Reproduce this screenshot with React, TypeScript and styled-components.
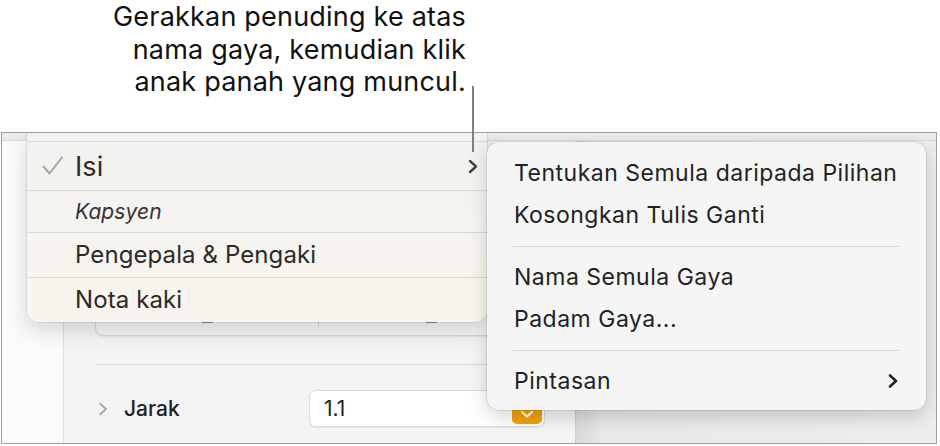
import React from "react";
import styled, { createGlobalStyle } from "styled-components";

const Global = createGlobalStyle`
  html, body { margin: 0; padding: 0; background: #ffffff; }
  body { font-family: Inter, "Noto Sans", sans-serif; -webkit-font-smoothing: antialiased; }
`;

const Page = styled.div`
  position: relative;
  width: 940px;
  height: 446px;
  overflow: hidden;
  background: #ffffff;
`;

const Callout = styled.div`
  height: 132px;
  width: 466px;
  box-sizing: border-box;
  padding-top: 1px;
  text-align: right;
  font-size: 27px;
  letter-spacing: 0.2px;
  line-height: 32.5px;
  color: #111111;
`;

const Leader = styled.div`
  position: absolute;
  left: 472px;
  top: 86px;
  width: 2px;
  height: 66px;
  background: #7f7f7f;
`;

const Frame = styled.div`
  position: relative;
  margin-left: 1px;
  width: 936px;
  height: 312px;
  box-sizing: border-box;
  border: 1px solid #9d9d9d;
  overflow: hidden;
  display: grid;
  grid-template-columns: 61px 512px 1fr;
  grid-template-rows: 8px 1fr;
`;

const TopBand = styled.div`
  grid-column: 1 / -1;
  background: #ececec;
  border-bottom: 1px solid #dadada;
`;

const Gutter = styled.div`
  background: #fbfbfb;
`;

const Panel = styled.div`
  background: #f4f4f4;
  border-left: 1px solid #dedede;
  box-sizing: border-box;
  padding: 138px 30px 0 31px;
  display: flex;
  flex-direction: column;
`;

const Canvas = styled.div`
  background: linear-gradient(90deg, #d9d9d9 0, #e8e8e8 26px, #eeeeee 100%);
  border-left: 1px solid #cccccc;
`;

const SegmentBox = styled.div`
  height: 57px;
  box-sizing: border-box;
  border: 1px solid #d6d6d6;
  border-radius: 8px;
  background: #f7f7f7;
  box-shadow: 0 1px 1px rgba(0, 0, 0, 0.06);
  display: grid;
  grid-template-columns: 223px 1fr;
`;

const SegmentCell = styled.div<{ $divider?: boolean }>`
  display: flex;
  align-items: flex-end;
  justify-content: center;
  padding-bottom: 10px;
  margin-bottom: 8px;
  border-right: ${(p) => (p.$divider ? "1px solid #d2d2d2" : "none")};
`;

const Dash = styled.span`
  display: block;
  width: 11px;
  height: 2px;
  background: #8c8c8c;
  margin-bottom: -6px;
`;

const Rule = styled.div`
  margin-top: 28px;
  height: 1px;
  background: #d9d9d9;
`;

const SpacingRow = styled.div`
  margin-top: 25px;
  display: grid;
  grid-template-columns: 29px 185px 1fr;
  align-items: center;
  height: 37px;
`;

const Disclosure = styled.svg`
  margin-left: 3px;
`;

const RowLabel = styled.span`
  font-size: 21px;
  font-weight: 500;
  color: #222222;
`;

const ValueField = styled.div`
  height: 37px;
  box-sizing: border-box;
  background: #ffffff;
  border: 1px solid #dadada;
  border-radius: 7px;
  box-shadow: 0 1px 1px rgba(0, 0, 0, 0.07);
  display: flex;
  align-items: center;
  justify-content: space-between;
  padding-left: 14px;
  padding-right: 2px;
  font-size: 21px;
  color: #222222;
`;

const PopupButton = styled.div`
  align-self: flex-end;
  margin-bottom: 2px;
  width: 30px;
  height: 21px;
  border-radius: 5px;
  background: #f0a20b;
  display: flex;
  align-items: center;
  justify-content: center;
`;

const StyleMenu = styled.div`
  position: absolute;
  top: 0;
  left: 25px;
  width: 460px;
  background: linear-gradient(180deg, #f2f1ef 0%, #f6f4f1 45%, #f9f4ed 100%);
  border-radius: 0 0 12px 12px;
  box-shadow: 0 8px 22px rgba(0, 0, 0, 0.16), 0 0 0 0.5px rgba(0, 0, 0, 0.14);
  overflow: hidden;
`;

const MenuStub = styled.div`
  height: 8px;
`;

const StyleRow = styled.div<{ $h: number }>`
  height: ${(p) => p.$h}px;
  box-sizing: border-box;
  border-top: 1px solid #dbd9d6;
  display: grid;
  grid-template-columns: 48px 1fr auto;
  align-items: center;
  padding-right: 8px;
`;

const CheckSlot = styled.div`
  padding-left: 15px;
  display: flex;
  align-items: center;
`;

const StyleName = styled.span<{ $size: number; $italic?: boolean }>`
  font-size: ${(p) => p.$size}px;
  font-style: ${(p) => (p.$italic ? "italic" : "normal")};
  letter-spacing: 0.1px;
  color: ${(p) => (p.$italic ? "#333333" : "#2a2a2a")};
  line-height: 1;
`;

const ContextMenu = styled.div`
  position: absolute;
  top: 9px;
  left: 485px;
  width: 439px;
  box-sizing: border-box;
  padding: 10px 27px 8px 27px;
  background: #f5f5f5;
  border-radius: 12px;
  box-shadow: 0 6px 20px rgba(0, 0, 0, 0.18), 0 0 0 0.5px rgba(0, 0, 0, 0.16);
`;

const MenuItem = styled.div`
  height: 42px;
  display: flex;
  align-items: center;
  justify-content: space-between;
  font-size: 23px;
  letter-spacing: 0.5px;
  color: #222222;
`;

const MenuSeparator = styled.div`
  height: 20px;
  display: flex;
  align-items: center;
  margin-left: -1px;
  &::after {
    content: "";
    display: block;
    width: 100%;
    height: 1px;
    background: #d6d6d6;
  }
`;

const Chevron = ({ color, w = 12, h = 16, sw = 2.4 }: { color: string; w?: number; h?: number; sw?: number }) => (
  <svg width={w} height={h} viewBox="0 0 12 16">
    <polyline points="3,2.5 9,8 3,13.5" fill="none" stroke={color} strokeWidth={sw} strokeLinecap="round" strokeLinejoin="round" />
  </svg>
);

const styles: { name: string; h: number; size: number; italic?: boolean; checked?: boolean }[] = [
  { name: "Isi", h: 49, size: 27, checked: true },
  { name: "Kapsyen", h: 42, size: 21, italic: true },
  { name: "Pengepala & Pengaki", h: 45, size: 24 },
  { name: "Nota kaki", h: 45, size: 24 },
];

export default function App() {
  return (
    <Page>
      <Global />
      <Callout>
        Gerakkan penuding ke atas
        <br />
        nama gaya, kemudian klik
        <br />
        anak panah yang muncul.
      </Callout>
      <Frame>
        <TopBand />
        <Gutter />
        <Panel>
          <SegmentBox>
            <SegmentCell $divider>
              <Dash />
            </SegmentCell>
            <SegmentCell>
              <Dash />
            </SegmentCell>
          </SegmentBox>
          <Rule />
          <SpacingRow>
            <Disclosure width="10" height="16" viewBox="0 0 10 16">
              <polyline points="2,2.5 8,8 2,13.5" fill="none" stroke="#a8a8a8" strokeWidth="1.8" strokeLinecap="round" strokeLinejoin="round" />
            </Disclosure>
            <RowLabel>Jarak</RowLabel>
            <ValueField>
              <span>1.1</span>
              <PopupButton>
                <svg width="14" height="10" viewBox="0 0 14 10">
                  <polyline points="2,3 7,7.5 12,3" fill="none" stroke="#ffffff" strokeWidth="2.2" strokeLinecap="round" strokeLinejoin="round" />
                </svg>
              </PopupButton>
            </ValueField>
          </SpacingRow>
        </Panel>
        <Canvas />
        <StyleMenu>
          <MenuStub />
          {styles.map((s) => (
            <StyleRow key={s.name} $h={s.h}>
              <CheckSlot>
                {s.checked && (
                  <svg width="22" height="20" viewBox="0 0 22 20">
                    <polyline points="1.5,10.5 7.5,17.5 20,1.5" fill="none" stroke="#a6a6a6" strokeWidth="2" strokeLinecap="round" strokeLinejoin="round" />
                  </svg>
                )}
              </CheckSlot>
              <StyleName $size={s.size} $italic={s.italic}>
                {s.name}
              </StyleName>
              {s.checked ? <Chevron color="#444444" w={12} h={17} sw={2.4} /> : <span />}
            </StyleRow>
          ))}
        </StyleMenu>
        <ContextMenu>
          <MenuItem>Tentukan Semula daripada Pilihan</MenuItem>
          <MenuItem>Kosongkan Tulis Ganti</MenuItem>
          <MenuSeparator />
          <MenuItem>Nama Semula Gaya</MenuItem>
          <MenuItem>Padam Gaya...</MenuItem>
          <MenuSeparator />
          <MenuItem>
            <span>Pintasan</span>
            <Chevron color="#222222" w={12} h={18} sw={2.6} />
          </MenuItem>
        </ContextMenu>
      </Frame>
      <Leader />
    </Page>
  );
}
